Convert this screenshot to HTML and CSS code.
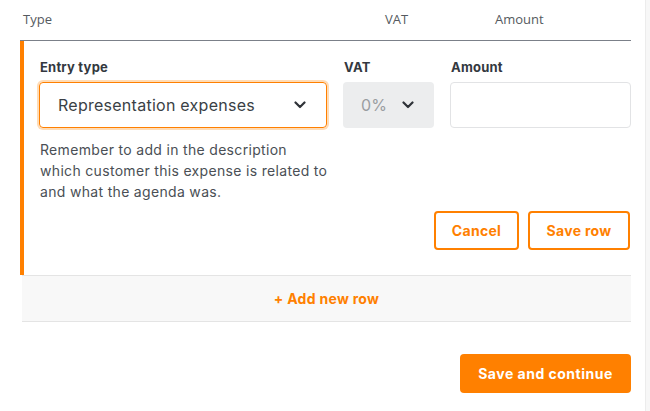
FILE: index.html
```html
<!DOCTYPE html>
<html>
<head>
<meta charset="utf-8">
<link rel="stylesheet" href="styles.css">
</head>
<body>
<div class="layout">
  <main class="page">
    <div class="table-head">
      <span class="th th-type">Type</span>
      <span class="th th-vat">VAT</span>
      <span class="th th-amount">Amount</span>
    </div>
    <section class="card">
      <div class="form-grid">
        <div class="field">
          <label class="label">Entry type</label>
          <div class="select select-focus">
            <span class="select-value">Representation expenses</span>
            <svg class="chev" width="12" height="8" viewBox="0 0 12 8"><path d="M1.5 1.5l4.5 4.5 4.5-4.5" fill="none" stroke="#2f3338" stroke-width="2.2" stroke-linecap="round" stroke-linejoin="round"/></svg>
          </div>
        </div>
        <div class="field">
          <label class="label">VAT</label>
          <div class="select select-disabled">
            <span class="select-value muted">0%</span>
            <svg class="chev" width="12" height="8" viewBox="0 0 12 8"><path d="M1.5 1.5l4.5 4.5 4.5-4.5" fill="none" stroke="#2f3338" stroke-width="2.2" stroke-linecap="round" stroke-linejoin="round"/></svg>
          </div>
        </div>
        <div class="field">
          <label class="label">Amount</label>
          <div class="input"></div>
        </div>
        <p class="hint">Remember to add in the description<br>which customer this expense is related to<br>and what the agenda was.</p>
      </div>
      <div class="actions">
        <button class="btn btn-outline btn-cancel">Cancel</button>
        <button class="btn btn-outline btn-save">Save row</button>
      </div>
    </section>
    <div class="add-row">+ Add new row</div>
    <div class="footer">
      <button class="btn btn-primary">Save and continue</button>
    </div>
  </main>
  <aside class="gutter"></aside>
</div>
</body>
</html>
```

FILE: styles.css
```css
* { box-sizing: border-box; }
html, body { margin: 0; padding: 0; background: #fff; }
body { font-family: "Inter", "Noto Sans", sans-serif; color: #333; }

.layout { display: flex; height: 411px; }
.page { width: 646px; padding: 0 14px 0 20px; border-right: 1px solid #ececec; flex: none; }
.gutter { flex: 1; background: #f7f7f7; }

.table-head {
  display: grid;
  grid-template-columns: 362px 110px 1fr;
  height: 41px;
  padding: 10px 0 0 3px;
  border-bottom: 1px solid #7b8089;
  font-family: "Open Sans", sans-serif;
  font-size: 13px;
  color: #555a60;
}

.card {
  border-left: 4px solid #ff8000;
  padding: 17px 1px 25px 15px;
}
.form-grid {
  display: grid;
  grid-template-columns: 288px 91px 181px;
  column-gap: 16px;
}
.field { display: flex; flex-direction: column; }
.label {
  font-size: 13px;
  font-weight: 700;
  color: #333840;
  line-height: 18px;
  letter-spacing: 0.2px;
  margin: 0 0 6px 1px;
}
.select {
  height: 46px;
  border-radius: 4px;
  display: flex;
  align-items: center;
  justify-content: space-between;
  padding: 0 20px 0 18px;
}
.select-focus {
  border: 1px solid #ff8000;
  box-shadow: 0 0 0 2px #ffdcb6;
}
.select-disabled { background: #ecedee; }
.select-value { font-size: 16px; color: #3a3f45; letter-spacing: 0.26px; }
.select-value.muted { color: #9a9da1; }
.chev { display: block; }
.input { height: 46px; border: 1px solid #e2e3e5; border-radius: 4px; }

.hint {
  grid-column: 1;
  margin: 11px -20px 0 1px;
  font-size: 14px;
  line-height: 21px;
  letter-spacing: 0.32px;
  white-space: nowrap;
  color: #4a4f55;
}

.actions {
  display: flex;
  justify-content: flex-end;
  gap: 9px;
  margin-top: 9px;
}
.btn {
  font-family: inherit;
  font-size: 14px;
  font-weight: 700;
  letter-spacing: 0.3px;
  height: 39px;
  border-radius: 4px;
  cursor: pointer;
}
.btn-outline {
  background: #fff;
  border: 2px solid #ff8000;
  color: #ff8000;
}
.btn-cancel { width: 85px; }
.btn-save { width: 102px; }

.add-row {
  margin-left: 2px;
  height: 47px;
  background: #f8f8f8;
  border-top: 1px solid #e4e4e4;
  border-bottom: 1px solid #e4e4e4;
  display: flex;
  align-items: center;
  justify-content: center;
  font-size: 14px;
  font-weight: 700;
  letter-spacing: 0.3px;
  color: #ff8000;
}

.footer { display: flex; justify-content: flex-end; padding-top: 32px; }
.btn-primary {
  width: 171px;
  background: #ff8000;
  border: none;
  color: #fff;
  letter-spacing: 0.5px;
}
```
